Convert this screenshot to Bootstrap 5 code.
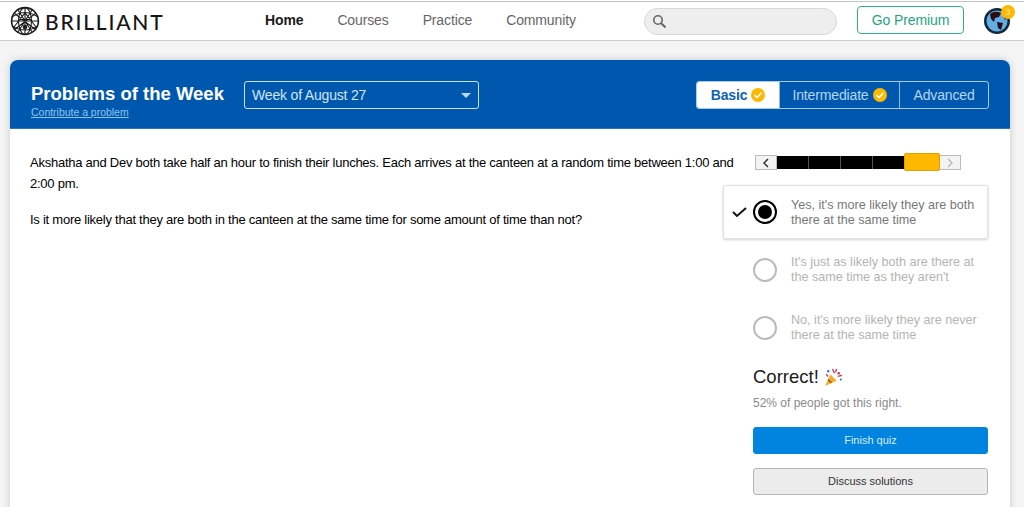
<!DOCTYPE html>
<html lang="en">
<head>
<meta charset="utf-8">
<title>Brilliant</title>
<link rel="stylesheet" href="https://cdn.jsdelivr.net/npm/bootstrap@5.3.0/dist/css/bootstrap.min.css">
<style>
html,body{height:507px;overflow:hidden}
body{background:#f5f5f5;font-family:"Liberation Sans",Arial,sans-serif;color:#000;font-size:13px}
.topbar{height:40px;background:#fff;border-top:1px solid #c4c4c4;border-bottom:1px solid #ccc;margin-top:1px;padding:0 0 0 10px;box-shadow:0 -1px 0 #fff}
.brand{width:255px;gap:5px;font-family:Lato,sans-serif;font-size:21px;letter-spacing:1.8px;color:#161616;font-weight:500;line-height:1}
.links{width:379px;gap:34px;font-size:14px;color:#666;letter-spacing:-.13px;padding-bottom:2px}
.links b{color:#1a1a1a}
.searchbox{width:193px;height:27px;background:#eee;border:1px solid #d8d8d8;border-radius:14px;padding-left:7px}
.premium{width:107px;height:28px;margin-left:20px;margin-bottom:2px;border:1px solid #2fae8c;border-radius:4px;color:#1fa47f;font-size:14px;line-height:26px;text-align:center;letter-spacing:-.1px}
.avatar-wrap{margin-left:20px;width:26px;height:26px}
.pip{position:absolute;top:-3px;right:-5px;width:14px;height:14px;border-radius:50%;background:#ffb800;color:#ffe9b0;font-size:9px;line-height:14px;text-align:center}
.panel{margin:19px 14px 0 10px;background:#fff;border-radius:8px 8px 0 0;box-shadow:0 0 8px rgba(0,0,0,.18);height:460px}
.phead{height:69px;background:#0058ae;border-radius:8px 8px 0 0;padding:0 21px 0 21px;color:#fff;border-bottom:1px solid #2d76bd}
.titleblock{width:213px;padding-top:23px}
.ptitle{font-size:18.5px;font-weight:700;line-height:22px}
.contrib{font-size:10.5px;line-height:13px;color:#8ec4f0;text-decoration:underline;display:block;margin-top:1px;letter-spacing:-.02px}
.weekbox{width:235px;height:28px;border:1px solid #cfe2f3;border-radius:3px;margin-top:21px;padding:0 7px 0 7px;font-size:14px;color:#cfe4f8;letter-spacing:-.18px}
.caret-down{width:0;height:0;border-left:5px solid transparent;border-right:5px solid transparent;border-top:5px solid #bcd8f2}
.levels{margin-top:21px;height:28px;border:1px solid #a9cbe9;border-radius:3px;font-size:14px;color:#b4d6f4;letter-spacing:-.15px}
.lvl{gap:4px;border-left:1px solid #8fb9dd;height:100%;justify-content:center}
.lvl.on{background:#fff;color:#0d62b3;font-weight:700;border:0;border-radius:2px 0 0 2px;width:82px}
.lvl.mid{width:120px}
.lvl.adv{width:89px}
.pbody{padding:0 22px 0 20px}
.prose{flex:0 0 708px;margin-right:-15px;padding-top:24px;font-size:13px;line-height:20.7px;letter-spacing:-.25px}
.prose p{margin:0 0 16px}
.sidecol{flex:0 0 265px}
.strip{margin:25px 0 0 32px;height:17px;width:206px}
.arrow{width:22px;height:15px;background:#f3f3f3;border:1px solid #bbb;color:#222}
.blackbar{flex:1;height:13px;background:#000;display:grid;grid-template-columns:repeat(4,32px);}
.blackbar i{border-right:1px solid #555;display:block}
.thumb{width:36px;height:18px;background:#ffb800;border:1px solid #e09e00;border-radius:2px;position:absolute;left:149px;top:-1px}
.opt{height:55px;gap:5px;padding-left:9px;color:#b4b4b4;font-size:12.6px;line-height:15px;margin-bottom:3px}
.opt.picked{background:#fff;border:1px solid #e2e2e2;box-shadow:0 1px 3px rgba(0,0,0,.18);color:#777;margin-top:14px;border-radius:2px;height:54px;padding-left:8px}
.tick{width:16px;flex:none}
.radio{width:24px;height:24px;border:2px solid #bbb;border-radius:50%;flex:none}
.picked .radio{border-color:#000;position:relative}
.picked .radio::after{content:"";position:absolute;inset:3px;border-radius:50%;background:#000}
.optlabel{width:195px;margin-left:9px;padding-top:1px}
.picked .optlabel{padding-top:2px}
.verdict{margin-left:30px;margin-top:10px}
.vtitle{font-size:18.5px;line-height:24px;color:#1a1a1a;gap:5px}
.vnote{font-size:12px;color:#8a8a8a;margin-top:7px;line-height:15px}
.finish,.discuss{display:block;width:235px;height:27px;font-size:11px;line-height:25px;text-align:center;border-radius:3px;padding:0;text-decoration:none}
.finish{background:#0084e0;border:1px solid #0084e0;color:#d6ecfb;margin-top:16px}
.discuss{background:#ececec;border:1px solid #b5b5b5;color:#333;margin-top:14px}
</style>
</head>
<body>
<nav class="topbar d-flex align-items-center">
  <div class="brand d-flex align-items-center">
    <svg width="30" height="30" viewBox="0 0 30 30" fill="none" stroke="#1c1c1c" stroke-width="1.1">
      <circle cx="15" cy="15" r="13.4" stroke-width="1.6"/>
      <ellipse cx="15" cy="15" rx="6.5" ry="13.4"/>
      <path d="M2 11Q15 2 28 11M2 20Q15 28 28 20M4 7L26 24M26 7L4 24M15 2V28M15 15L2 15M15 15L28 15M8 4L15 15L22 4M8 26L15 15L22 26M4 21L15 7L26 21"/>
      <circle cx="15" cy="21" r="1.8" fill="#1c1c1c"/>
    </svg>
    <span>BRILLIANT</span>
  </div>
  <div class="links d-flex align-items-center"><b>Home</b><span>Courses</span><span>Practice</span><span>Community</span></div>
  <div class="searchbox d-flex align-items-center">
    <svg width="15" height="15" viewBox="0 0 15 15" fill="none" stroke="#666" stroke-width="1.6"><circle cx="6" cy="6" r="4.2"/><path d="M9.2 9.2L13.5 13.5" stroke-width="2"/></svg>
  </div>
  <div class="premium">Go Premium</div>
  <div class="avatar-wrap position-relative">
    <svg width="26" height="26" viewBox="0 0 26 26"><circle cx="13" cy="13" r="13" fill="#10283c"/><circle cx="13" cy="13" r="10.5" fill="#64aee6"/><path d="M6 6Q11 2 17 5L15 9L11 10L10 14L7 11ZM13 14L19 15L17 22L14 20ZM19 7L23 10L21 12Z" fill="#2a0e12"/></svg>
    <span class="pip">3</span>
  </div>
</nav>
<main class="panel">
  <header class="phead d-flex">
    <div class="titleblock">
      <div class="ptitle">Problems of the Week</div>
      <a class="contrib">Contribute a problem</a>
    </div>
    <div class="weekbox d-flex align-items-center justify-content-between"><span>Week of August 27</span><span class="caret-down"></span></div>
    <div class="levels d-flex ms-auto">
      <div class="lvl on d-flex align-items-center">Basic
        <svg width="14" height="14" viewBox="0 0 14 14"><circle cx="7" cy="7" r="7" fill="#ffb800"/><path d="M3.5 7.2L6 9.6L10.5 4.8" fill="none" stroke="#fff" stroke-width="1.6"/></svg>
      </div>
      <div class="lvl mid d-flex align-items-center">Intermediate
        <svg width="14" height="14" viewBox="0 0 14 14"><circle cx="7" cy="7" r="7" fill="#ffb800"/><path d="M3.5 7.2L6 9.6L10.5 4.8" fill="none" stroke="#fff" stroke-width="1.6"/></svg>
      </div>
      <div class="lvl adv d-flex align-items-center">Advanced</div>
    </div>
  </header>
  <section class="pbody d-flex">
    <div class="prose">
      <p>Akshatha and Dev both take half an hour to finish their lunches. Each arrives at the canteen at a random time between 1:00 and 2:00 pm.</p>
      <p>Is it more likely that they are both in the canteen at the same time for some amount of time than not?</p>
    </div>
    <div class="sidecol">
      <div class="strip d-flex align-items-center position-relative">
        <div class="arrow d-flex align-items-center justify-content-center"><svg width="8" height="10" viewBox="0 0 8 10" fill="none" stroke="#333" stroke-width="1.5"><path d="M6 1L2 5L6 9"/></svg></div>
        <div class="blackbar"><i></i><i></i><i></i><i></i></div>
        <div class="arrow d-flex align-items-center justify-content-center"><svg width="8" height="10" viewBox="0 0 8 10" fill="none" stroke="#bbb" stroke-width="1.5"><path d="M2 1L6 5L2 9"/></svg></div>
        <div class="thumb"></div>
      </div>
      <div class="opt picked d-flex align-items-center">
        <svg class="tick" width="16" height="12" viewBox="0 0 16 12" fill="none" stroke="#111" stroke-width="2"><path d="M1 6L5 10L14 2"/></svg>
        <span class="radio"></span><span class="optlabel">Yes, it's more likely they are both there at the same time</span>
      </div>
      <div class="opt d-flex align-items-center">
        <span class="tick"></span><span class="radio"></span><span class="optlabel">It's just as likely both are there at the same time as they aren't</span>
      </div>
      <div class="opt d-flex align-items-center">
        <span class="tick"></span><span class="radio"></span><span class="optlabel">No, it's more likely they are never there at the same time</span>
      </div>
      <div class="verdict">
        <div class="vtitle d-flex align-items-center">Correct!
          <svg width="19" height="19" viewBox="0 0 18 18"><path d="M6 6L12 12L1 17Z" fill="#f0b030"/><path d="M4 11L7 14" stroke="#a8541a" stroke-width="1.5"/><circle cx="4" cy="3" r="1.2" fill="#3a7fc1"/><circle cx="14" cy="5" r="1.2" fill="#c2395a"/><circle cx="16" cy="11" r="1" fill="#3a7fc1"/><path d="M8 1L10 5M12 1L11 4M13 8L17 7M2 6L4 8" stroke="#c2395a" stroke-width="1.3"/></svg>
        </div>
        <div class="vnote">52% of people got this right.</div>
        <a class="finish">Finish quiz</a>
        <a class="discuss">Discuss solutions</a>
      </div>
    </div>
  </section>
</main>
<script src="https://cdn.jsdelivr.net/npm/bootstrap@5.3.0/dist/js/bootstrap.bundle.min.js"></script>
</body>
</html>
